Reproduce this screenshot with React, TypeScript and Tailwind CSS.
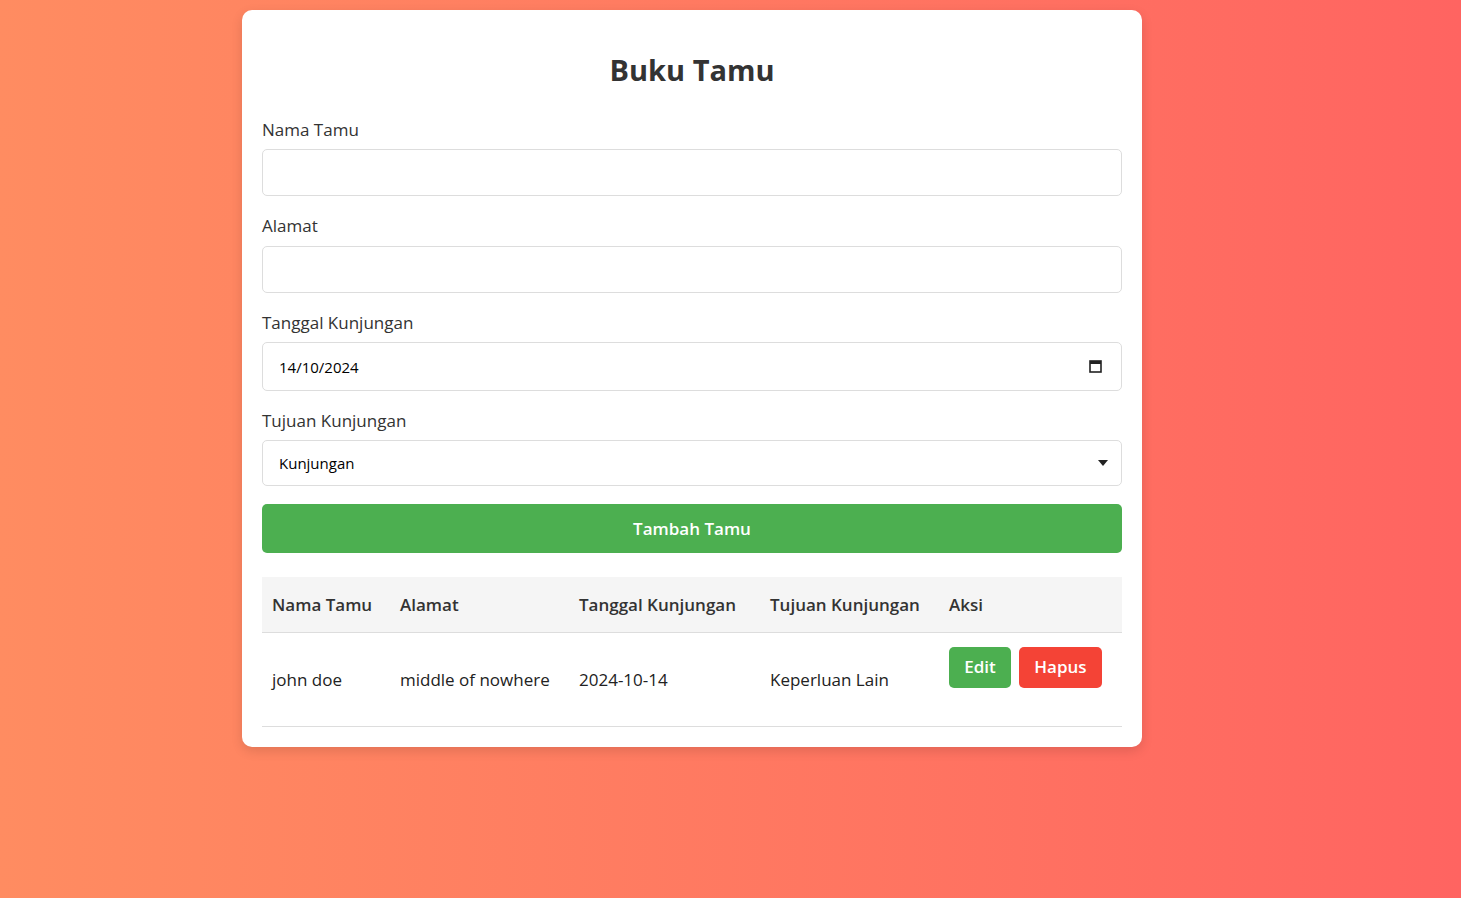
import { useState } from 'react';

const guests = [
  { nama: 'john doe', alamat: 'middle of nowhere', tanggal: '2024-10-14', tujuan: 'Keperluan Lain' }
];

export default function App() {
  const [nama, setNama] = useState('');
  const [alamat, setAlamat] = useState('');
  const [tujuan, setTujuan] = useState('Kunjungan');

  return (
    <div className="min-h-[898px] w-full bg-gradient-to-r from-[#ff8c61] to-[#ff6461] pt-[10px] font-['Open_Sans',sans-serif] text-[#333]">
      <div className="ml-[242px] w-[900px] rounded-[10px] bg-white p-5 shadow-[0_4px_12px_rgba(0,0,0,0.12)]">
        <h1 className="mt-[23px] mb-[32px] text-center text-[29px] leading-[34px] font-bold text-[#333]">Buku Tamu</h1>

        {/* Form */}
        <label className="mb-[8px] block text-[17px] leading-[22px]">Nama Tamu</label>
        <input
          value={nama}
          onChange={(e) => setNama(e.target.value)}
          className="mb-[19px] block h-[47px] w-full rounded-[5px] border border-[#ddd] px-4 text-[15px] outline-none"
        />

        <label className="mb-[9px] block text-[17px] leading-[22px]">Alamat</label>
        <input
          value={alamat}
          onChange={(e) => setAlamat(e.target.value)}
          className="mb-[19px] block h-[47px] w-full rounded-[5px] border border-[#ddd] px-4 text-[15px] outline-none"
        />

        <label className="mb-[8px] block text-[17px] leading-[22px]">Tanggal Kunjungan</label>
        <div className="relative mb-[19px]">
          <input
            readOnly
            value="14/10/2024"
            className="block h-[49px] w-full rounded-[5px] border border-[#ddd] px-4 text-[15px] text-black outline-none"
          />
          <svg className="absolute top-[18px] right-[20px]" width="13" height="13" viewBox="0 0 13 13">
            <rect x="1" y="1" width="11" height="11" fill="none" stroke="#222" strokeWidth="1.6" />
            <rect x="1" y="1" width="11" height="3" fill="#222" />
          </svg>
        </div>

        <label className="mb-[8px] block text-[17px] leading-[22px]">Tujuan Kunjungan</label>
        <div className="relative mb-[18px]">
          <select
            value={tujuan}
            onChange={(e) => setTujuan(e.target.value)}
            className="block h-[46px] w-full appearance-none rounded-[5px] border border-[#ddd] bg-white px-4 text-[15px] text-black outline-none"
          >
            <option>Kunjungan</option>
            <option>Keperluan Lain</option>
          </select>
          <svg className="pointer-events-none absolute top-[20px] right-[14px]" width="10" height="6" viewBox="0 0 10 6">
            <path d="M0 0h10L5 6z" fill="#222" />
          </svg>
        </div>

        <button className="block h-[49px] w-full rounded-[5px] bg-[#4caf50] text-[17px] font-semibold text-white">
          Tambah Tamu
        </button>

        {/* Table */}
        <table className="mt-6 w-full border-collapse text-left">
          <thead>
            <tr className="h-[55px] border-b border-[#ddd] bg-[#f5f5f5]">
              <th className="w-[128px] px-[10px] text-[17px] font-semibold">Nama Tamu</th>
              <th className="w-[179px] px-[10px] text-[17px] font-semibold">Alamat</th>
              <th className="w-[191px] px-[10px] text-[17px] font-semibold">Tanggal Kunjungan</th>
              <th className="w-[179px] px-[10px] text-[17px] font-semibold">Tujuan Kunjungan</th>
              <th className="px-[10px] text-[17px] font-semibold">Aksi</th>
            </tr>
          </thead>
          <tbody>
            {guests.map((g) => (
              <tr key={g.nama} className="h-[94px] border-b border-[#ddd] text-[17px] text-[#222]">
                <td className="px-[10px] pt-[2px]">{g.nama}</td>
                <td className="px-[10px] pt-[2px]">{g.alamat}</td>
                <td className="px-[10px] pt-[2px]">{g.tanggal}</td>
                <td className="px-[10px] pt-[2px]">{g.tujuan}</td>
                <td className="px-[10px] pt-[14px] align-top">
                  <div className="flex gap-2">
                    <button className="h-[41px] w-[62px] rounded-[5px] bg-[#4caf50] text-[17px] font-semibold text-white">Edit</button>
                    <button className="h-[41px] w-[83px] rounded-[5px] bg-[#f44336] text-[17px] font-semibold text-white">Hapus</button>
                  </div>
                </td>
              </tr>
            ))}
          </tbody>
        </table>
      </div>
    </div>
  );
}
